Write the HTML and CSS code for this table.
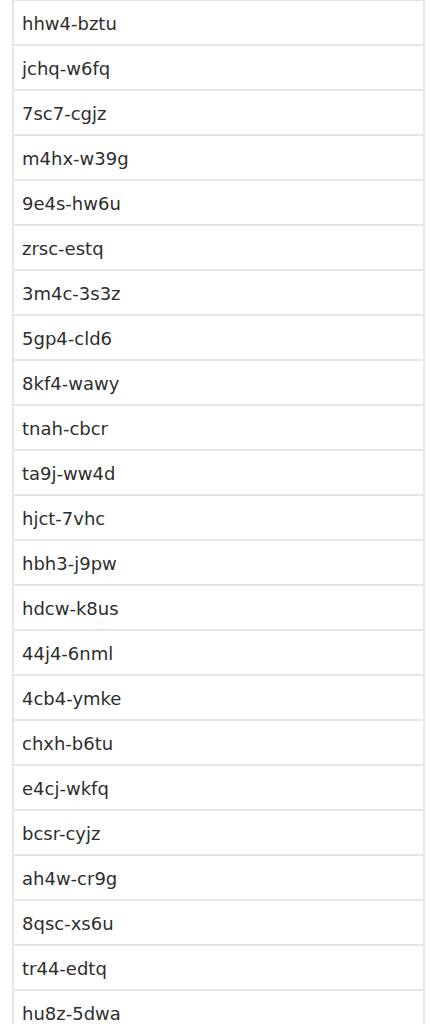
FILE: index.html
```html
<!DOCTYPE html>
<html lang="en">
<head>
<meta charset="utf-8">
<title>Codes</title>
<link rel="stylesheet" href="styles.css">
</head>
<body>
<div class="page">
  <ul class="code-list">
    <li class="code-row">hhw4-bztu</li>
    <li class="code-row">jchq-w6fq</li>
    <li class="code-row">7sc7-cgjz</li>
    <li class="code-row">m4hx-w39g</li>
    <li class="code-row">9e4s-hw6u</li>
    <li class="code-row">zrsc-estq</li>
    <li class="code-row">3m4c-3s3z</li>
    <li class="code-row">5gp4-cld6</li>
    <li class="code-row">8kf4-wawy</li>
    <li class="code-row">tnah-cbcr</li>
    <li class="code-row">ta9j-ww4d</li>
    <li class="code-row">hjct-7vhc</li>
    <li class="code-row">hbh3-j9pw</li>
    <li class="code-row">hdcw-k8us</li>
    <li class="code-row">44j4-6nml</li>
    <li class="code-row">4cb4-ymke</li>
    <li class="code-row">chxh-b6tu</li>
    <li class="code-row">e4cj-wkfq</li>
    <li class="code-row">bcsr-cyjz</li>
    <li class="code-row">ah4w-cr9g</li>
    <li class="code-row">8qsc-xs6u</li>
    <li class="code-row">tr44-edtq</li>
    <li class="code-row">hu8z-5dwa</li>
  </ul>
</div>
</body>
</html>
```
FILE: styles.css
```css
html, body {
  margin: 0;
  padding: 0;
  background: #ffffff;
}

.page {
  padding: 0 5px 0 12px;
}

.code-list {
  list-style: none;
  margin: 0;
  padding: 0;
  border-top: 1px solid #e2e2e2;
  border-left: 2px solid #e6e6e6;
  border-right: 2px solid #e6e6e6;
}

.code-row {
  height: 43px;
  display: flex;
  align-items: center;
  padding-left: 8px;
  padding-top: 2px;
  box-sizing: border-box;
  height: 45px;
  border-bottom: 2px solid #e6e6e6;
  font-family: "DejaVu Sans", Verdana, sans-serif;
  font-size: 18px;
  color: #2e2e2e;
}
```
